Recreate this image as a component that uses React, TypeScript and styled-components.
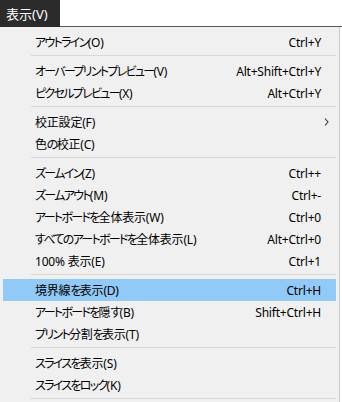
import React from "react";
import styled, { createGlobalStyle } from "styled-components";

const Global = createGlobalStyle`
  html, body { margin: 0; padding: 0; background: #ffffff; }
  body { width: 342px; height: 402px; overflow: hidden; }
`;

const font = `"Segoe UI", "Noto Sans", "Noto Sans CJK JP", sans-serif`;

const Page = styled.div`
  width: 342px;
  height: 402px;
  display: flex;
  flex-direction: column;
  font-family: ${font};
  font-size: 12px;
  color: #000;
`;

const TopBar = styled.div`
  display: flex;
  height: 27px;
  flex: none;
`;

const Title = styled.div`
  width: 60px;
  background: #2b2b2b;
  color: #ffffff;
  font-size: 13px;
  display: flex;
  align-items: center;
  padding-left: 6px;
  box-sizing: border-box;
`;

const Filler = styled.div`
  flex: 1;
  background: #ffffff;
  border-bottom: 1px solid #5a5a5a;
`;

const Menu = styled.div`
  flex: 1;
  width: 340px;
  box-sizing: border-box;
  background: #f0f0f0;
  border-right: 1px solid #cccccc;
  padding: 4px 3px 0 3px;
  display: flex;
  flex-direction: column;
`;

const Item = styled.div<{ $active?: boolean }>`
  height: 22px;
  flex: none;
  display: flex;
  align-items: center;
  padding-left: 32px;
  padding-right: 15px;
  background: ${(p) => (p.$active ? "#91c9f7" : "transparent")};
  position: relative;
`;

const Label = styled.span`
  flex: 1;
  white-space: nowrap;
  font-feature-settings: "palt";
  letter-spacing: -0.2px;
`;

const Kana = styled.span`
  letter-spacing: -1.7px;
`;

const Shortcut = styled.span`
  white-space: nowrap;
  letter-spacing: -0.2px;
`;

const Arrow = styled.svg`
  position: absolute;
  right: 7px;
  top: 7px;
`;

const Separator = styled.div`
  height: 1px;
  flex: none;
  background: #d7d7d7;
  margin: 2px 0 4px 28px;
`;

type Entry = { label: string; key?: string; sub?: boolean; active?: boolean } | "sep";

const entries: Entry[] = [
  { label: "アウトライン(O)", key: "Ctrl+Y" },
  "sep",
  { label: "オーバープリントプレビュー(V)", key: "Alt+Shift+Ctrl+Y" },
  { label: "ピクセルプレビュー(X)", key: "Alt+Ctrl+Y" },
  "sep",
  { label: "校正設定(F)", sub: true },
  { label: "色の校正(C)" },
  "sep",
  { label: "ズームイン(Z)", key: "Ctrl++" },
  { label: "ズームアウト(M)", key: "Ctrl+-" },
  { label: "アートボードを全体表示(W)", key: "Ctrl+0" },
  { label: "すべてのアートボードを全体表示(L)", key: "Alt+Ctrl+0" },
  { label: "100% 表示(E)", key: "Ctrl+1" },
  "sep",
  { label: "境界線を表示(D)", key: "Ctrl+H", active: true },
  { label: "アートボードを隠す(B)", key: "Shift+Ctrl+H" },
  { label: "プリント分割を表示(T)" },
  "sep",
  { label: "スライスを表示(S)" },
  { label: "スライスをロック(K)" },
  "sep",
];

function renderLabel(text: string) {
  const parts = text.split(/([\u3040-\u30ff]+)/).filter(Boolean);
  return parts.map((p, i) =>
    /^[\u3040-\u30ff]+$/.test(p) ? <Kana key={i}>{p}</Kana> : <React.Fragment key={i}>{p}</React.Fragment>
  );
}

export default function App() {
  return (
    <>
      <Global />
      <Page>
        <TopBar>
          <Title>表示(V)</Title>
          <Filler />
        </TopBar>
        <Menu>
          {entries.map((e, i) =>
            e === "sep" ? (
              <Separator key={i} />
            ) : (
              <Item key={i} $active={e.active}>
                <Label>{renderLabel(e.label)}</Label>
                {e.key && <Shortcut>{e.key}</Shortcut>}
                {e.sub && (
                  <Arrow width="5" height="8" viewBox="0 0 5 8">
                    <path d="M1 0.5 L4 4 L1 7.5" fill="none" stroke="#333" strokeWidth="1.1" />
                  </Arrow>
                )}
              </Item>
            )
          )}
        </Menu>
      </Page>
    </>
  );
}
